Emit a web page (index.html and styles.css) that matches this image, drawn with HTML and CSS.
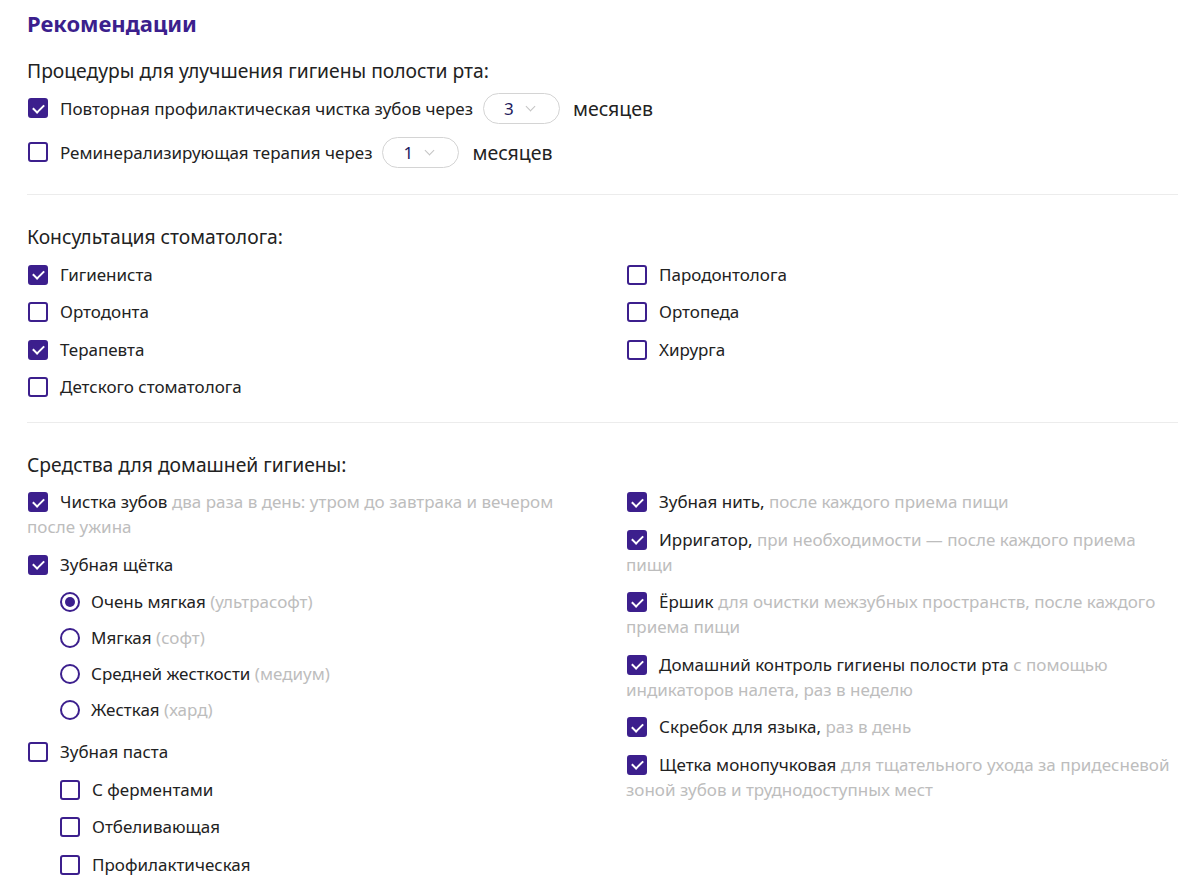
FILE: index.html
```html
<!DOCTYPE html>
<html>
<head>
    <meta charset="utf-8">
    <title>Рекомендации</title>
    <link rel="stylesheet" href="styles.css">
</head>
<body>
    <div id="recs">
        <h1 class="title">Рекомендации</h1>

        <div class="section first">
            <h2 class="section-title">Процедуры для улучшения гигиены полости рта:</h2>
            <div class="proc-list">
                <div class="proc-row">
                    <span class="check on"></span>
                    <span class="label">Повторная профилактическая чистка зубов через</span>
                    <span class="pill">3 <span class="chev"></span></span>
                    <span class="unit">месяцев</span>
                </div>
                <div class="proc-row">
                    <span class="check"></span>
                    <span class="label">Реминерализирующая терапия через</span>
                    <span class="pill">1 <span class="chev"></span></span>
                    <span class="unit">месяцев</span>
                </div>
            </div>
        </div>

        <div class="section">
            <h2 class="section-title">Консультация стоматолога:</h2>
            <div class="cols">
                <div class="col">
                    <div class="item"><span class="check on"></span>Гигиениста</div>
                    <div class="item"><span class="check"></span>Ортодонта</div>
                    <div class="item"><span class="check on"></span>Терапевта</div>
                    <div class="item"><span class="check"></span>Детского стоматолога</div>
                </div>
                <div class="col">
                    <div class="item"><span class="check"></span>Пародонтолога</div>
                    <div class="item"><span class="check"></span>Ортопеда</div>
                    <div class="item"><span class="check"></span>Хирурга</div>
                </div>
            </div>
        </div>

        <div class="section last">
            <h2 class="section-title">Средства для домашней гигиены:</h2>
            <div class="cols">
                <div class="col">
                    <div class="item"><span class="check on"></span>Чистка зубов <span class="hint">два раза в день: утром до завтрака и вечером после ужина</span></div>
                    <div class="item"><span class="check on"></span>Зубная щётка</div>
                    <div class="radios">
                        <div class="item"><span class="radio on"></span>Очень мягкая <span class="hint">(ультрасофт)</span></div>
                        <div class="item"><span class="radio"></span>Мягкая <span class="hint">(софт)</span></div>
                        <div class="item"><span class="radio"></span>Средней жесткости <span class="hint">(медиум)</span></div>
                        <div class="item"><span class="radio"></span>Жесткая <span class="hint">(хард)</span></div>
                    </div>
                    <div class="item"><span class="check"></span>Зубная паста</div>
                    <div class="sub">
                        <div class="item"><span class="check"></span>С ферментами</div>
                        <div class="item"><span class="check"></span>Отбеливающая</div>
                        <div class="item"><span class="check"></span>Профилактическая</div>
                    </div>
                </div>
                <div class="col">
                    <div class="item"><span class="check on"></span>Зубная нить, <span class="hint">после каждого приема пищи</span></div>
                    <div class="item"><span class="check on"></span>Ирригатор, <span class="hint">при необходимости — после каждого приема пищи</span></div>
                    <div class="item"><span class="check on"></span>Ёршик <span class="hint">для очистки межзубных пространств, после каждого приема пищи</span></div>
                    <div class="item"><span class="check on"></span>Домашний контроль гигиены полости рта <span class="hint">с помощью индикаторов налета, раз в неделю</span></div>
                    <div class="item"><span class="check on"></span>Скребок для языка, <span class="hint">раз в день</span></div>
                    <div class="item"><span class="check on"></span>Щетка монопучковая <span class="hint">для тщательного ухода за придесневой зоной зубов и труднодоступных мест</span></div>
                </div>
            </div>
        </div>
    </div>
</body>
</html>
```

FILE: styles.css
```css
body {
    margin: 0;
    font-family: "Noto Sans", "Open Sans", sans-serif;
    color: #222;
    background-color: #fff;
}

#recs {
    padding: 8px 22px 0 27px;
}

.title {
    margin: 0;
    font-size: 22px;
    line-height: 30px;
    font-weight: bold;
    color: #3c1f8d;
}

.section {
    padding: 29px 0 22.5px;
    border-bottom: 1px solid #ececec;
}

.section.first {
    padding: 19.5px 0 26.5px;
}

.section.last {
    border-bottom: none;
}

.section-title {
    margin: 0 0 12.5px;
    font-size: 19.3px;
    line-height: 25px;
    font-weight: normal;
    color: #222;
}

.first .section-title {
    margin-bottom: 10px;
}

.proc-list {
    display: flex;
    flex-direction: column;
    gap: 13px;
}

.proc-row {
    display: flex;
    align-items: center;
    height: 31px;
    font-size: 17px;
}

.proc-row .check {
    margin-right: 12px;
}

.pill {
    display: inline-flex;
    align-items: center;
    box-sizing: border-box;
    width: 77px;
    height: 31px;
    margin: 0 13px 0 10px;
    padding-left: 20px;
    border: 1px solid #d4d4d4;
    border-radius: 16px;
    color: #1d1a5c;
    font-size: 17px;
}

.chev {
    width: 6px;
    height: 6px;
    margin-left: 13px;
    margin-top: -4px;
    border-right: 1px solid #c4c4c4;
    border-bottom: 1px solid #c4c4c4;
    transform: rotate(45deg);
}

.unit {
    font-size: 19.5px;
}

.cols {
    display: grid;
    grid-template-columns: 552px 552px;
    column-gap: 47px;
}

.col {
    display: flex;
    flex-direction: column;
    gap: 12.5px;
}

.item {
    font-size: 17px;
    line-height: 25px;
}

.hint {
    color: #bdbdbd;
}

.check {
    display: inline-block;
    box-sizing: border-box;
    width: 20px;
    height: 20px;
    margin: 0 12px 0 1px;
    vertical-align: -4px;
    border: 2px solid #3c1f8d;
    border-radius: 3px;
    background-color: #fff;
    position: relative;
}

.check.on {
    background-color: #3c1f8d;
}

.check.on::after {
    content: "";
    position: absolute;
    left: 5px;
    top: 1.5px;
    width: 5px;
    height: 9px;
    border-right: 2px solid #fff;
    border-bottom: 2px solid #fff;
    transform: rotate(45deg);
}

.radio {
    display: inline-block;
    box-sizing: border-box;
    width: 20px;
    height: 20px;
    margin-right: 11px;
    vertical-align: -4px;
    border: 2px solid #3c1f8d;
    border-radius: 50%;
    position: relative;
}

.radio.on::after {
    content: "";
    position: absolute;
    left: 3px;
    top: 3px;
    width: 10px;
    height: 10px;
    border-radius: 50%;
    background-color: #3c1f8d;
}

.radios {
    display: flex;
    flex-direction: column;
    gap: 11px;
    padding-left: 33px;
    margin-bottom: 4.5px;
}

.sub {
    display: flex;
    flex-direction: column;
    gap: 12.5px;
    padding-left: 32px;
}
```
